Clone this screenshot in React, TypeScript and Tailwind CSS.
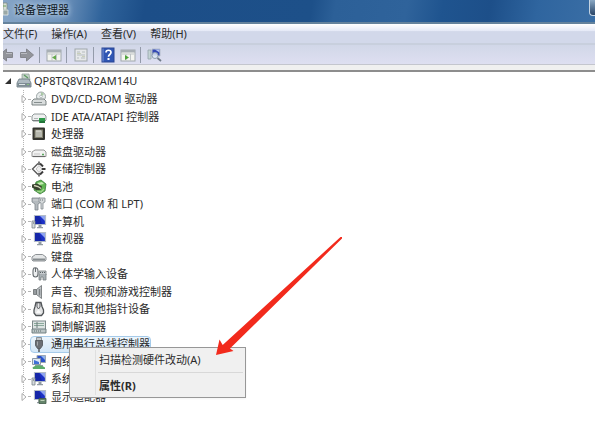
import React from 'react';

type IconProps = { children: React.ReactNode };

function Glyph({ children }: IconProps) {
    return (
        <svg viewBox="0 0 16 16" className="w-4 h-4 shrink-0" aria-hidden="true">
            {children}
        </svg>
    );
}

const ComputerIcon = () => (
    <Glyph>
        <path d="M6 1h7l1 6H6z" fill="#c3d2c9" stroke="#8b9a94" strokeWidth=".7" />
        <path d="M8 2l4 3" stroke="#5d9a62" strokeWidth="1.3" />
        <path d="M3 6h10l2 4v4H1v-4z" fill="#aebac1" stroke="#66747c" strokeWidth=".8" />
        <path d="M1.500 10h13v3.500h-13z" fill="#7e8c94" />
        <path d="M3 11.500h6" stroke="#dfe6e9" />
        <path d="M11 11.500h2" stroke="#87c27d" />
    </Glyph>
);

const DiscIcon = () => (
    <Glyph>
        <circle cx="10" cy="5.500" r="4.500" fill="#e8ecec" stroke="#8f9a9a" strokeWidth=".9" />
        <path d="M10 1v5l3-3z" fill="#a9c9a4" />
        <circle cx="10" cy="5.500" r="1.300" fill="#fff" stroke="#8f9a9a" strokeWidth=".6" />
        <path d="M3 8h10l2 2v4H1v-4z" fill="#d9dddd" stroke="#707878" strokeWidth=".9" />
        <path d="M3 11.500h8" stroke="#858d8d" />
    </Glyph>
);

const IdeIcon = () => (
    <Glyph>
        <path d="M3 5h10l2 2v4l-1 1H2l-1-1V7z" fill="#eef0f0" stroke="#858d8d" strokeWidth=".9" />
        <path d="M1.500 11.500h13" stroke="#777f7f" />
        <path d="M3 9.500h4" stroke="#b0b6b6" />
        <path d="M8 9h6v5H8z" fill="#2f9a4b" />
        <path d="M9 13h5" stroke="#164f28" />
    </Glyph>
);

const CpuIcon = () => (
    <Glyph>
        <rect x="1.500" y="1.500" width="12.500" height="12.500" rx="1" fill="#34342f" />
        <rect x="4" y="4" width="7.500" height="7.500" fill="#b7b8ae" stroke="#807f6d" />
        <path d="M5 5h5" stroke="#e3e3dc" />
    </Glyph>
);

const DriveIcon = () => (
    <Glyph>
        <path d="M4 6h9l2 2v4.500H1V8z" fill="#f2f2f2" stroke="#8b8b8b" strokeWidth=".9" />
        <path d="M2 12.500h12" stroke="#686868" strokeWidth="1.200" />
        <path d="M3 10h6" stroke="#c5c5c5" />
        <path d="M11 10.500h2" stroke="#5aa95e" strokeWidth="1.300" />
    </Glyph>
);

const StorageIcon = () => (
    <Glyph>
        <path d="M7 2.500L1.500 8 7 13.500" fill="none" stroke="#5c5c5c" strokeWidth="1.400" />
        <path d="M9 2.500L12 5.500M9 13.500L12 10.500" fill="none" stroke="#3c3c3c" strokeWidth="2" />
        <path d="M10.500 8h4" stroke="#3c3c3c" strokeWidth="2" />
        <path d="M8 4.500L11 8 8 11.500 5 8z" fill="#eeeeee" stroke="#9a9a9a" strokeWidth=".6" />
        <path d="M8 12v3.500M8 .5V4" stroke="#4c4c4c" strokeWidth="1.500" />
    </Glyph>
);

const BatteryIcon = () => (
    <Glyph>
        <path d="M5 3l5-2 5 4-1 7-5 3-6-4z" fill="#5fb551" stroke="#3a7a3a" strokeWidth=".8" />
        <path d="M6 4l5-1 2 2-5 1z" fill="#c6ecb4" />
        <path d="M1 5.500l5-1 5 3-1 3-4 1-5-3z" fill="#39432f" />
        <path d="M3 6.500l4 1 3 2" fill="none" stroke="#d7d8bd" strokeWidth="1.300" />
        <path d="M6 12l4 1 3-3" fill="none" stroke="#a5d890" strokeWidth="1.200" />
    </Glyph>
);

const PortIcon = () => (
    <Glyph>
        <path d="M1 2h8l1 4-3 2v6H4V8L1 6z" fill="#b4babe" stroke="#7e878c" strokeWidth=".8" />
        <path d="M2.500 4h5" stroke="#f2f2f2" strokeWidth="1.200" strokeDasharray="1 1" />
        <path d="M8 2h6v4l-2 1v6h-2V7L8 6z" fill="#d4d8da" stroke="#838b8f" strokeWidth=".8" />
        <path d="M9 4h4" stroke="#6c7478" strokeDasharray="1 1" />
    </Glyph>
);

const MonitorShape = () => (
    <>
        <path d="M3.500 1.500h11v9h-11z" fill="#1c31c5" stroke="#b3bcc8" strokeWidth="1.200" />
        <path d="M9 2h5v5z" fill="#8fa4f0" />
        <path d="M4 2h4l3 8H4z" fill="#1526a8" />
        <path d="M7.500 11h3v2h-3zM6 13h6v1.300H6z" fill="#929ba3" />
    </>
);

const PcIcon = () => (
    <Glyph>
        <MonitorShape />
        <path d="M1 7h3v7H1z" fill="#d5dadd" stroke="#7b858b" strokeWidth=".8" />
        <path d="M2 9h1" stroke="#5d676d" />
    </Glyph>
);

const MonitorIcon = () => (
    <Glyph>
        <MonitorShape />
    </Glyph>
);

const KeyboardIcon = () => (
    <Glyph>
        <path d="M4.500 5.500h7L15 8v3l-1 1H2l-1-1V8z" fill="#e4e6e7" stroke="#81878a" strokeWidth=".9" />
        <path d="M2 10.500h12" stroke="#868c8f" strokeWidth="2" />
    </Glyph>
);

const HidIcon = () => (
    <Glyph>
        <path d="M3 2c3-1 4 1 4 3v3c0 4-5 4-5 0V5c0-1 0-2 1-3z" fill="#eceeef" stroke="#676d70" strokeWidth="1.100" />
        <path d="M4.500 2v4" stroke="#676d70" />
        <path d="M8 5h7v4H8z" fill="#c6cbce" stroke="#777e82" strokeWidth=".8" />
        <path d="M8 9v5h2v-3h2v3h3V8" fill="#a8b0b4" stroke="#777e82" strokeWidth=".8" />
        <path d="M9 6.500h5" stroke="#596064" strokeDasharray="1 1" />
    </Glyph>
);

const SpeakerIcon = () => (
    <Glyph>
        <path d="M2.500 5.500h3v5h-3z" fill="#969b9e" stroke="#686d70" strokeWidth=".8" />
        <path d="M5.500 5.500L10.500 1.500v13l-5-4z" fill="#bfc4c6" stroke="#686d70" strokeWidth=".8" />
        <path d="M8.500 5v6.500" stroke="#7c8184" strokeWidth="1.500" />
    </Glyph>
);

const MouseIcon = () => (
    <Glyph>
        <path d="M5 1.500h5l1 4 1.500 3.500v3l-2 2.500H5l-2-2.500V9l1-3.500z" fill="#e3e4e5" stroke="#505457" strokeWidth="1.300" />
        <path d="M6 2v4l1.500 2L9 6V2" fill="none" stroke="#505457" strokeWidth=".9" />
        <path d="M7.500 8L5 12h5z" fill="#fafafa" />
    </Glyph>
);

const ModemIcon = () => (
    <Glyph>
        <rect x="1.500" y="2" width="13" height="9" fill="#dce3e2" stroke="#7e8a8b" />
        <path d="M3 4.500h10M3 6.500h10" stroke="#8aa99b" />
        <path d="M6 3v6" stroke="#6d7c7d" />
        <path d="M1 10h14v4H1z" fill="#bbc5c6" stroke="#687778" strokeWidth=".9" />
        <path d="M3 12h7" stroke="#5e6e6f" strokeDasharray="1 1" />
    </Glyph>
);

const UsbIcon = () => (
    <Glyph>
        <path d="M5.500 1.500h5v4h-5z" fill="#c7cbcf" stroke="#777d83" strokeWidth=".8" />
        <path d="M4.500 4.500h7V9.500L9.500 12.500h-3L4.500 9.500z" fill="#6b6f75" stroke="#4d5156" strokeWidth=".8" />
        <path d="M6.500 5.500v4" stroke="#a3a8ac" />
        <path d="M8 12.500V16" stroke="#505459" strokeWidth="1.500" />
    </Glyph>
);

const NetworkIcon = () => (
    <Glyph>
        <path d="M6 1.500h8.500v7H6z" fill="#2b51c9" stroke="#9ba7b3" />
        <path d="M10 2h4v4z" fill="#8eb4f0" />
        <path d="M1.500 4.500h8v6h-8z" fill="#dce7f4" stroke="#8b99a8" />
        <path d="M3 6l5 2v2H3z" fill="#3f70d8" />
        <path d="M4 11h8v1.500H4z" fill="#98a3a8" />
        <path d="M1.500 13.500c4-3 8-3 12.500 0v1.500h-12z" fill="#5bac6b" />
    </Glyph>
);

const DisplayIcon = () => (
    <Glyph>
        <MonitorShape />
        <path d="M8 9.500h7v5H8z" fill="#65856b" stroke="#405948" strokeWidth=".8" />
        <path d="M9.500 11.500h4" stroke="#bdd0b7" />
    </Glyph>
);

const devices = [
    { name: 'DVD/CD-ROM 驱动器', icon: DiscIcon },
    { name: 'IDE ATA/ATAPI 控制器', icon: IdeIcon },
    { name: '处理器', icon: CpuIcon },
    { name: '磁盘驱动器', icon: DriveIcon },
    { name: '存储控制器', icon: StorageIcon },
    { name: '电池', icon: BatteryIcon },
    { name: '端口 (COM 和 LPT)', icon: PortIcon },
    { name: '计算机', icon: PcIcon },
    { name: '监视器', icon: MonitorIcon },
    { name: '键盘', icon: KeyboardIcon },
    { name: '人体学输入设备', icon: HidIcon },
    { name: '声音、视频和游戏控制器', icon: SpeakerIcon },
    { name: '鼠标和其他指针设备', icon: MouseIcon },
    { name: '调制解调器', icon: ModemIcon },
    { name: '通用串行总线控制器', icon: UsbIcon, selected: true },
    { name: '网络适配器', icon: NetworkIcon },
    { name: '系统设备', icon: PcIcon },
    { name: '显示适配器', icon: DisplayIcon },
];

const menus = ['文件(F)', '操作(A)', '查看(V)', '帮助(H)'];

function TitleBar() {
    return (
        <header className="flex h-6 items-start justify-between overflow-hidden border-b-2 border-[#64829c] bg-[linear-gradient(100deg,#86a5c6_0%,#6f93bb_10%,#2f639b_17%,#1c4e88_24%,#1d5089_52%,#2c6098_56%,#2f639b_68%,#1f548f_74%,#1d4f89_82%,#2f659f_90%,#3a6ea5_100%)]">
            <div className="flex items-center">
                <svg viewBox="0 0 7 16" className="h-4 w-[7px]" aria-hidden="true">
                    <path d="M0 2h4v7H0z" fill="#d7dfd5" stroke="#7d8c86" strokeWidth=".8" />
                    <path d="M0 9h5v5H0z" fill="#9aa8a6" stroke="#e4eae9" strokeWidth=".8" />
                    <path d="M0 5h3" stroke="#6fa05e" />
                </svg>
                <h1 className="ml-1 mt-[2px] leading-4 text-[#0e1824] [text-shadow:0_0_5px_#c4d8ec,0_0_7px_#b4cce4]">设备管理器</h1>
            </div>
            <button aria-label="最小化" className="h-4 w-[6px] rounded-bl border-b border-l border-[#c3d3e2] bg-linear-to-b from-[#8aa8c4] to-[#2a4567]" />
        </header>
    );
}

function MenuBar() {
    return (
        <nav className="flex h-[21px] items-center gap-[14px] border-b-2 border-[#c8cfdd] bg-linear-to-b from-white via-[#e6eaf7] via-35% to-[#d2d8ea] to-40%">
            {menus.map((label) => (
                <button key={label} className="leading-4 whitespace-nowrap">{label}</button>
            ))}
        </nav>
    );
}

const Separator = () => <span className="h-4 w-px bg-[#949baa]" />;

function ArrowButton({ back }: { back?: boolean }) {
    return (
        <button aria-label={back ? '后退' : '前进'} className={back ? 'w-[11px] overflow-hidden flex justify-end' : 'ml-px'}>
            <svg viewBox="0 0 16 16" className={back ? 'w-4 h-4 shrink-0 -scale-x-100' : 'w-4 h-4'}>
                <path d="M1.500 5.500h6V2l7 6-7 6v-3.500h-6z" fill="#92949a" stroke="#84868c" />
                <path d="M2 6.500h6" stroke="#b9bbc1" />
            </svg>
        </button>
    );
}

function PaneIcon({ side }: { side?: boolean }) {
    return (
        <Glyph>
            <rect x="1" y="3" width="14" height="11" fill="#f4f5f0" stroke="#a0a7ac" />
            <path d="M1 3h14v2.500H1z" fill="#a8afb5" />
            <path d="M2 7h12M6 7v7M10.500 7v7" stroke="#c0c5c6" />
            {side ? <path d="M5 8l4 2.500L5 13z" fill="#4fa33b" /> : <path d="M10 8l-4 2.500L10 13z" fill="#65a84d" />}
        </Glyph>
    );
}

function Toolbar() {
    return (
        <div className="flex h-5 items-center gap-1 border-b border-[#c4c6ce] bg-linear-to-b from-[#d1d7e8] to-[#dedff1]">
            <ArrowButton back />
            <ArrowButton />
            <Separator />
            <button aria-label="显示控制台树" className="ml-[2px]"><PaneIcon /></button>
            <Separator />
            <button aria-label="属性" className="ml-[2px]">
                <Glyph>
                    <rect x="2" y="2" width="12" height="12" fill="#e6e8ea" stroke="#a0a7ab" />
                    <path d="M4 5h3M9 5h3M4 8h8M4 11h2M8 11h4" stroke="#b5bcbe" />
                    <path d="M4 6.500h4M9 9.500h3" stroke="#c9cfb9" />
                </Glyph>
            </button>
            <Separator />
            <button aria-label="帮助" className="ml-[2px]">
                <svg viewBox="0 0 16 16" className="w-4 h-4">
                    <rect x="2" y="1" width="12" height="14" fill="#3056b4" stroke="#2a4794" />
                    <path d="M3 1.500v13" stroke="#7993d4" />
                    <path d="M6 5.500c0-3 5-3 5 0 0 2-2.500 2-2.500 4.200" fill="none" stroke="#fff" strokeWidth="1.700" />
                    <rect x="7.500" y="11" width="2" height="2" fill="#fff" />
                </svg>
            </button>
            <button aria-label="显示操作窗格"><PaneIcon side /></button>
            <Separator />
            <button aria-label="扫描检测硬件改动" className="ml-[2px]">
                <Glyph>
                    <path d="M1 3h3v9H1z" fill="#c4d4d4" stroke="#94a3aa" strokeWidth=".8" />
                    <path d="M5 2h8v7H5z" fill="#3348b4" stroke="#b3bccb" />
                    <path d="M8 2.500h4.500v3z" fill="#b4c4f0" />
                    <circle cx="8" cy="8.500" r="3" fill="#dfeaf4" fillOpacity=".85" stroke="#8b9db0" />
                    <path d="M10.500 11l3.500 3" stroke="#6f7a87" strokeWidth="1.800" />
                </Glyph>
            </button>
        </div>
    );
}

function DeviceTree() {
    return (
        <div>
            <div className="flex h-[18px] items-center">
                <button aria-label="折叠" className="ml-px flex w-3 shrink-0">
                    <svg viewBox="0 0 8 8" className="w-2 h-2"><path d="M7 1v6H1z" fill="#303030" /></svg>
                </button>
                <ComputerIcon />
                <span className="ml-[2px]">QP8TQ8VIR2AM14U</span>
            </div>
            <ul className="relative">
                <li aria-hidden="true" className="absolute bottom-2 left-5 top-0 border-l border-dotted border-[#b5b5b5]" />
                {devices.map(({ name, icon: Icon, selected }) => (
                    <li key={name} className="relative flex items-center pl-[17px] odd:h-[17px] even:h-[18px]">
                        <button aria-label={`展开 ${name}`} className="flex w-2 shrink-0">
                            <svg viewBox="0 0 8 8" className="w-2 h-2">
                                <path d="M2 .5L6 4 2 7.500z" fill="#fff" stroke="#a4a4a4" strokeWidth=".9" />
                            </svg>
                        </button>
                        <span className="w-[2px] border-t border-dotted border-[#b5b5b5]" />
                        <span className={selected
                            ? 'flex h-[17px] items-center gap-1 rounded-sm border border-[#a6cbea] bg-linear-to-b from-[#edf6fd] to-[#d3e7f8]'
                            : 'flex items-center gap-1 border border-transparent'}
                        >
                            <Icon />
                            <span className="leading-4 whitespace-nowrap">{name}</span>
                        </span>
                    </li>
                ))}
            </ul>
        </div>
    );
}

function ContextMenu() {
    return (
        <div role="menu" className="absolute left-[69px] top-[347px] flex w-[177px] flex-col border border-[#979797] bg-[#f0f0f0] p-[2px] shadow-xs">
            <span className="absolute inset-y-[2px] left-[25px] border-l border-[#dfdfdf]" />
            <button role="menuitem" className="h-[19px] pl-[27px] text-left">扫描检测硬件改动(A)</button>
            <hr className="my-[3px] ml-[26px] border-[#d8d8d8]" />
            <button role="menuitem" className="h-[19px] pl-[27px] text-left font-bold">属性(R)</button>
        </div>
    );
}

export default function App() {
    return (
        <div className="relative min-h-screen bg-white pl-[3px] pr-[5px] text-[11px] leading-4 text-[#2b2b2b] font-['Noto_Sans','Noto_Sans_CJK_SC',sans-serif]">
            <TitleBar />
            <MenuBar />
            <Toolbar />
            <div className="h-[7px] border-b-2 border-[#8d8d8d] bg-[#f0f0f0]" />
            <DeviceTree />
            <ContextMenu />
            <svg viewBox="216 237 126 118" className="pointer-events-none absolute left-[216px] top-[237px] w-[126px] h-[118px]" aria-hidden="true">
                <path d="M342 237L340.500 237L222.700 345L219.500 339.500L216 355L233.500 351L230 348.500L342 238.500Z" fill="#f22a1c" />
            </svg>
        </div>
    );
}
